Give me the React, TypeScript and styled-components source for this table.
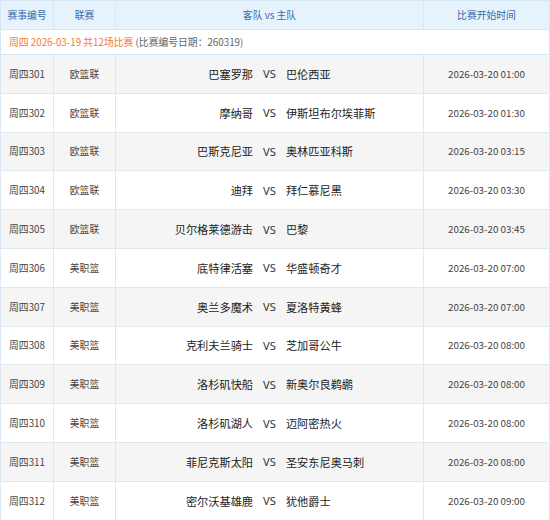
import React from "react";
import styled, { createGlobalStyle } from "styled-components";

const Global = createGlobalStyle`
  html, body { margin: 0; padding: 0; background: #fff; }
  body { font-family: "Noto Sans CJK SC", "Noto Sans", sans-serif; }
`;

const Table = styled.table`
  width: 549px;
  border-collapse: collapse;
  table-layout: fixed;
  font-size: 9.8px;
  color: #333;
`;

const HeadCell = styled.th`
  height: 28px;
  padding: 0;
  background: #e6f3fd;
  border: 1px solid #d6e7f5;
  color: #3b68a8;
  font-weight: normal;
  font-size: 9.8px;
  text-align: center;
`;

const InfoCell = styled.td`
  height: 24px;
  padding: 0 0 0 8px;
  border: 1px solid #d6e7f5;
  background: #fff;
  font-size: 9.8px;
  color: #666;
`;

const Highlight = styled.span`
  color: #f47b36;
`;

const Row = styled.tr<{ $alt: boolean }>`
  background: ${(p) => (p.$alt ? "#f5f5f5" : "#ffffff")};
`;

const Cell = styled.td`
  height: 37.8px;
  padding: 0;
  border: 1px solid #dde9f4;
  text-align: center;
  font-size: 9.8px;
  color: #444;
`;

const Match = styled.div`
  display: grid;
  grid-template-columns: 1fr auto 1fr;
  column-gap: 10px;
  align-items: center;
  font-size: 11.2px;
  color: #222;
`;

const Away = styled.span`
  text-align: right;
`;

const Home = styled.span`
  text-align: left;
`;

const Vs = styled.span`
  font-family: "Noto Sans", sans-serif;
  font-size: 11.2px;
  color: #333;
`;

type M = [string, string, string, string, string];

const matches: M[] = [
  ["周四301", "欧篮联", "巴塞罗那", "巴伦西亚", "2026-03-20 01:00"],
  ["周四302", "欧篮联", "摩纳哥", "伊斯坦布尔埃菲斯", "2026-03-20 01:30"],
  ["周四303", "欧篮联", "巴斯克尼亚", "奥林匹亚科斯", "2026-03-20 03:15"],
  ["周四304", "欧篮联", "迪拜", "拜仁慕尼黑", "2026-03-20 03:30"],
  ["周四305", "欧篮联", "贝尔格莱德游击", "巴黎", "2026-03-20 03:45"],
  ["周四306", "美职篮", "底特律活塞", "华盛顿奇才", "2026-03-20 07:00"],
  ["周四307", "美职篮", "奥兰多魔术", "夏洛特黄蜂", "2026-03-20 07:00"],
  ["周四308", "美职篮", "克利夫兰骑士", "芝加哥公牛", "2026-03-20 08:00"],
  ["周四309", "美职篮", "洛杉矶快船", "新奥尔良鹈鹕", "2026-03-20 08:00"],
  ["周四310", "美职篮", "洛杉矶湖人", "迈阿密热火", "2026-03-20 08:00"],
  ["周四311", "美职篮", "菲尼克斯太阳", "圣安东尼奥马刺", "2026-03-20 08:00"],
  ["周四312", "美职篮", "密尔沃基雄鹿", "犹他爵士", "2026-03-20 09:00"],
];

export default function App() {
  return (
    <>
      <Global />
      <Table>
        <colgroup>
          <col style={{ width: 53 }} />
          <col style={{ width: 62 }} />
          <col style={{ width: 308 }} />
          <col style={{ width: 126 }} />
        </colgroup>
        <thead>
          <tr>
            <HeadCell>赛事编号</HeadCell>
            <HeadCell>联赛</HeadCell>
            <HeadCell>客队 vs 主队</HeadCell>
            <HeadCell>比赛开始时间</HeadCell>
          </tr>
        </thead>
        <tbody>
          <tr>
            <InfoCell colSpan={4}>
              <Highlight>周四 2026-03-19 共12场比赛</Highlight> (比赛编号日期：260319)
            </InfoCell>
          </tr>
          {matches.map((m, i) => (
            <Row key={m[0]} $alt={i % 2 === 0}>
              <Cell>{m[0]}</Cell>
              <Cell>{m[1]}</Cell>
              <Cell>
                <Match>
                  <Away>{m[2]}</Away>
                  <Vs>VS</Vs>
                  <Home>{m[3]}</Home>
                </Match>
              </Cell>
              <Cell>{m[4]}</Cell>
            </Row>
          ))}
        </tbody>
      </Table>
    </>
  );
}
